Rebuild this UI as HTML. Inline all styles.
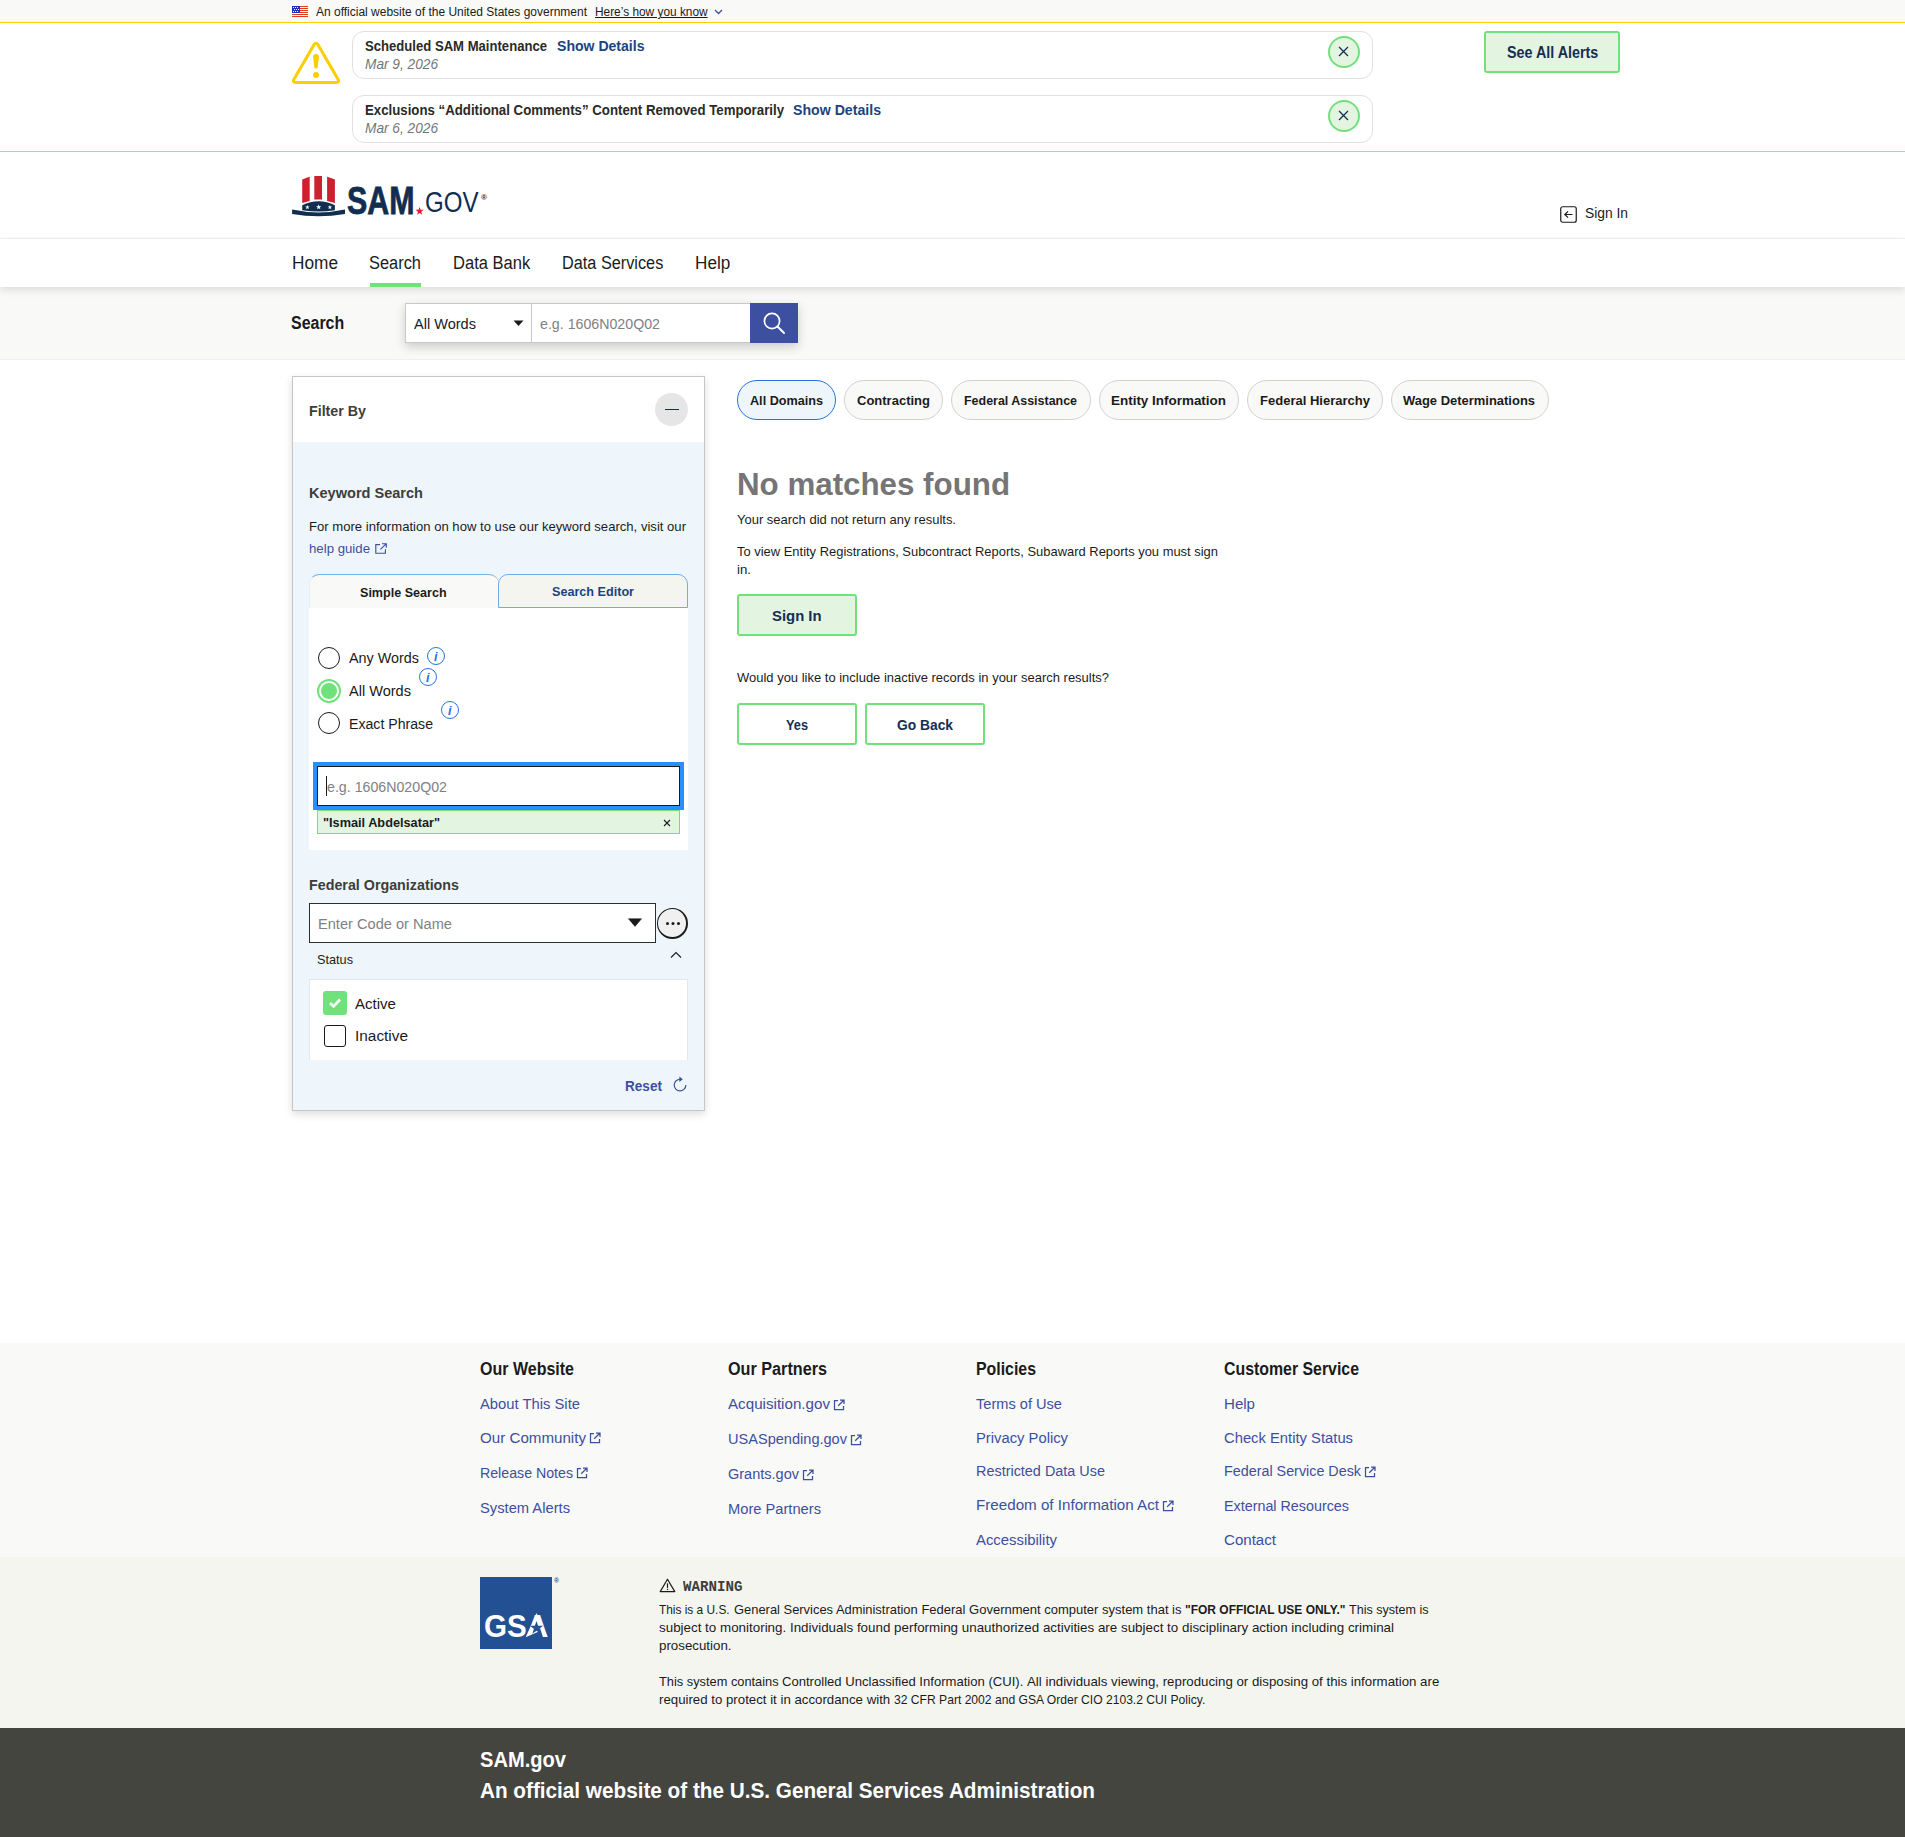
<!DOCTYPE html>
<html lang="en">
<head>
<meta charset="utf-8">
<title>SAM.gov | Search</title>
<style>
*{box-sizing:border-box;margin:0;padding:0}
html,body{width:1905px;height:1837px;overflow:hidden;background:#fff}
body{position:relative;font-family:"Liberation Sans",sans-serif;color:#1b1b1b}
.b{position:absolute}
.t{position:absolute;white-space:nowrap;line-height:1;transform-origin:0 0;display:block}
a.t{text-decoration:none}
.mono{font-family:"Liberation Mono",monospace}
svg{position:absolute;overflow:visible}
</style>
</head>
<body>
<!-- ===== gov banner ===== -->
<div class="b" style="left:0;top:0;width:1905px;height:22px;background:#f9f9f7"></div>
<section>
<!-- ===== flag + chevron ===== -->
<svg style="left:292px;top:6px" width="16" height="11" viewBox="0 0 16 11" shape-rendering="crispEdges"><rect width="16" height="11" fill="#fff"/><g fill="#db3e1f"><rect y="0" width="16" height="1"/><rect y="2" width="16" height="1"/><rect y="4" width="16" height="1"/><rect y="6" width="16" height="1"/><rect y="8" width="16" height="1"/><rect y="10" width="16" height="1"/></g><rect width="8" height="7" fill="#1e33b1"/><rect x="1" y="1" width="1" height="1" fill="#fff"/><rect x="3" y="1" width="1" height="1" fill="#fff"/><rect x="5" y="1" width="1" height="1" fill="#fff"/><rect x="2" y="3" width="1" height="1" fill="#fff"/><rect x="4" y="3" width="1" height="1" fill="#fff"/><rect x="6" y="3" width="1" height="1" fill="#fff"/><rect x="1" y="5" width="1" height="1" fill="#fff"/><rect x="3" y="5" width="1" height="1" fill="#fff"/><rect x="5" y="5" width="1" height="1" fill="#fff"/></svg>
<svg style="left:714px;top:9px" width="9" height="6" viewBox="0 0 9 6"><path d="M1 1 L4.5 4.5 L8 1" fill="none" stroke="#3d4f9f" stroke-width="1.3"/></svg>
<!-- ===== alerts ===== -->
<div class="b" style="left:0;top:22px;width:1905px;height:130px;border-top:1px solid #face00;border-bottom:1px solid #face00;background:#fff"></div>
<svg style="left:292px;top:41px" width="48" height="44" viewBox="0 0 48 44"><path d="M22.43 3.10 A1.8 1.8 0 0 1 25.57 3.10 L46.33 38.80 A1.8 1.8 0 0 1 44.78 41.50 L3.22 41.50 A1.8 1.8 0 0 1 1.67 38.80 Z" fill="none" stroke="#face00" stroke-width="3" stroke-linejoin="round"/><path d="M21.1 15.6 Q21.1 12.9 24 12.9 Q26.9 12.9 26.9 15.6 L25.8 26 Q25.6 27.6 24 27.6 Q22.4 27.6 22.2 26 Z" fill="#face00"/><circle cx="24" cy="33.9" r="3" fill="#face00"/></svg>
<div class="b" style="left:352px;top:31px;width:1021px;height:48px;border:1px solid #e0e0e0;border-radius:12px;background:#fff"></div>
<div class="b" style="left:352px;top:95px;width:1021px;height:48px;border:1px solid #e0e0e0;border-radius:12px;background:#fff"></div>
<div class="b" style="left:1328px;top:36px;width:32px;height:32px;border:2px solid #70e17b;border-radius:50%;background:#e3f5e1"></div>
<div class="b" style="left:1328px;top:100px;width:32px;height:32px;border:2px solid #70e17b;border-radius:50%;background:#e3f5e1"></div>
<svg style="left:1337.7px;top:45.8px" width="11" height="11" viewBox="0 0 11 11"><path d="M1 1 L10 10 M10 1 L1 10" stroke="#162e51" stroke-width="1.3" fill="none"/></svg>
<svg style="left:1337.7px;top:109.8px" width="11" height="11" viewBox="0 0 11 11"><path d="M1 1 L10 10 M10 1 L1 10" stroke="#162e51" stroke-width="1.3" fill="none"/></svg>
<div class="b" style="left:1484px;top:31px;width:136px;height:42px;border:2px solid #70e17b;border-radius:3px;background:#e3f5e1"></div>
<span class="t" style="left:316.00px;top:6.00px;font-size:12.5px;font-weight:400;color:#1b1b1b;transform:scaleX(0.9590);">An official website of the United States government</span>
<a class="t" href="#" style="left:595.10px;top:6.00px;font-size:12.5px;font-weight:400;color:#1b1b1b;text-decoration:underline;transform:scaleX(0.9495);">Here’s how you know</a>
<span class="t" style="left:365.00px;top:38.00px;font-size:15px;font-weight:700;color:#2a2a28;transform:scaleX(0.8734);">Scheduled SAM Maintenance</span>
<a class="t" href="#" style="left:556.60px;top:38.00px;font-size:15px;font-weight:700;color:#1a4480;transform:scaleX(0.9372);">Show Details</a>
<span class="t" style="left:365.00px;top:56.00px;font-size:15px;font-weight:400;color:#71767a;font-style:italic;transform:scaleX(0.9120);">Mar 9, 2026</span>
<span class="t" style="left:365.00px;top:102.00px;font-size:15px;font-weight:700;color:#2a2a28;transform:scaleX(0.8825);">Exclusions “Additional Comments” Content Removed Temporarily</span>
<a class="t" href="#" style="left:792.80px;top:102.00px;font-size:15px;font-weight:700;color:#1a4480;transform:scaleX(0.9426);">Show Details</a>
<span class="t" style="left:365.00px;top:120.00px;font-size:15px;font-weight:400;color:#71767a;font-style:italic;transform:scaleX(0.9120);">Mar 6, 2026</span>
<a class="t" href="#" style="left:1506.80px;top:45.00px;font-size:15.7px;font-weight:700;color:#162e51;transform:scaleX(0.9121);">See All Alerts</a>
</section>
<header>
<!-- ===== header ===== -->
<svg style="left:292px;top:174px" width="54" height="44" viewBox="0 0 54 44">
<path d="M10.2 5.6 Q14 3.6 17.7 2.7 L17.7 26.9 Q14 27.6 10.2 29 Z" fill="#cf2030"/>
<path d="M22.3 2.1 Q26.2 1.8 30 2.1 L30 25.6 Q26.2 25.3 22.3 25.6 Z" fill="#cf2030"/>
<path d="M35.1 2.8 Q39 3.7 42.9 5.6 L42.9 29.1 Q39 27.6 35.1 26.9 Z" fill="#cf2030"/>
<path d="M10.2 31.3 Q26.5 23.1 42.9 31.3 L42.9 36.2 Q26.5 38.9 10.2 36.2 Z" fill="#112e51"/>
<path d="M0.1 35.6 Q26.5 41.3 53 35.6 L53 39.9 Q26.5 44.5 0.1 39.9 Z" fill="#112e51"/>
<polygon points="15.40,30.90 15.96,32.52 17.68,32.56 16.31,33.60 16.81,35.24 15.40,34.26 13.99,35.24 14.49,33.60 13.12,32.56 14.84,32.52" fill="#fff"/>
<polygon points="26.70,30.30 27.36,32.19 29.36,32.23 27.77,33.45 28.35,35.37 26.70,34.22 25.05,35.37 25.63,33.45 24.04,32.23 26.04,32.19" fill="#fff"/>
<polygon points="37.90,30.90 38.46,32.52 40.18,32.56 38.81,33.60 39.31,35.24 37.90,34.26 36.49,35.24 36.99,33.60 35.62,32.56 37.34,32.52" fill="#fff"/>
</svg>
<svg style="left:414px;top:205px" width="12" height="12" viewBox="0 0 12 12"><polygon points="5.60,1.90 6.61,4.81 9.69,4.87 7.24,6.73 8.13,9.68 5.60,7.92 3.07,9.68 3.96,6.73 1.51,4.87 4.59,4.81" fill="#d8202f"/></svg>
<svg style="left:1560px;top:206px" width="17" height="17" viewBox="0 0 17 17"><rect x="0.75" y="0.75" width="15.5" height="15.5" rx="2" fill="none" stroke="#1b1b1b" stroke-width="1.2"/><path d="M12.5 8.5 H5 M8 5.3 L4.8 8.5 L8 11.7" fill="none" stroke="#1b1b1b" stroke-width="1.2"/></svg>
<div class="b" style="left:0;top:238px;width:1905px;height:1px;background:#f3f3f0"></div>
<div class="b" style="left:0;top:287px;width:1905px;height:73px;background:#f9f9f7;border-bottom:1px solid #f0f0ec"></div>
<div class="b" style="left:0;top:239px;width:1905px;height:48px;background:#fff;box-shadow:0 3px 8px rgba(0,0,0,.12)"></div>
<div class="b" style="left:370px;top:283px;width:51px;height:4px;background:#70e17b"></div>
<!-- search bar -->
<div class="b" style="left:405px;top:303px;width:393px;height:40px;box-shadow:0 4px 10px rgba(0,0,0,.18);background:#fff"></div>
<div class="b" style="left:405px;top:303px;width:127px;height:40px;border:1px solid #c9c9c9;background:#fff"></div>
<div class="b" style="left:531px;top:303px;width:220px;height:40px;border:1px solid #c9c9c9;background:#fff"></div>
<svg style="left:513px;top:320px" width="11" height="7" viewBox="0 0 11 7"><path d="M0.5 0.5 H10.5 L5.5 6 Z" fill="#1b1b1b"/></svg>
<div class="b" style="left:750px;top:303px;width:48px;height:40px;background:#3d4fa1"></div>
<svg style="left:762px;top:311px" width="24" height="24" viewBox="0 0 24 24"><circle cx="10" cy="10" r="7.6" fill="none" stroke="#fff" stroke-width="1.7"/><path d="M15.5 15.5 L22 22" stroke="#fff" stroke-width="2" stroke-linecap="round"/></svg>
<a class="t" href="#" style="left:1585.00px;top:205.00px;font-size:15.5px;font-weight:400;color:#1b1b1b;transform:scaleX(0.8921);">Sign In</a>
<a class="t" href="#" style="left:291.50px;top:255.00px;font-size:17.6px;font-weight:400;color:#1b1b1b;transform:scaleX(0.9800);">Home</a>
<a class="t" href="#" style="left:369.00px;top:255.00px;font-size:17.6px;font-weight:400;color:#1b1b1b;transform:scaleX(0.9327);">Search</a>
<a class="t" href="#" style="left:452.80px;top:255.00px;font-size:17.6px;font-weight:400;color:#1b1b1b;transform:scaleX(0.9397);">Data Bank</a>
<a class="t" href="#" style="left:561.60px;top:255.00px;font-size:17.6px;font-weight:400;color:#1b1b1b;transform:scaleX(0.9250);">Data Services</a>
<a class="t" href="#" style="left:694.80px;top:255.00px;font-size:17.6px;font-weight:400;color:#1b1b1b;transform:scaleX(0.9755);">Help</a>
<label class="t" style="left:291.40px;top:314.00px;font-size:18px;font-weight:700;color:#1b1b1b;transform:scaleX(0.8860);">Search</label>
<span class="t" style="left:414.00px;top:316.00px;font-size:15.5px;font-weight:400;color:#1b1b1b;transform:scaleX(0.9387);">All Words</span>
<span class="t" style="left:540.00px;top:316.00px;font-size:15.5px;font-weight:400;color:#7f8183;transform:scaleX(0.9160);">e.g. 1606N020Q02</span>
<span class="t" style="left:347.30px;top:181.00px;font-size:39.6px;font-weight:700;color:#112e51;-webkit-text-stroke:0.8px #112e51;transform:scaleX(0.7667);">SAM</span>
<span class="t" style="left:425.20px;top:188.00px;font-size:29px;font-weight:400;color:#112e51;transform:scaleX(0.8299);">GOV</span>
<span class="t" style="left:480.80px;top:194.00px;font-size:8px;font-weight:700;color:#112e51;transform:scaleX(1.0159);">®</span>
</header>
<aside>
<!-- ===== filter panel ===== -->
<div class="b" style="left:292px;top:376px;width:413px;height:735px;border:1px solid #c6c6c6;background:#eff6fb;box-shadow:0 3px 8px rgba(0,0,0,.14)"></div>
<div class="b" style="left:293px;top:377px;width:411px;height:65px;background:#fff"></div>
<div class="b" style="left:655px;top:393px;width:33px;height:33px;border-radius:50%;background:#e6e6e6"></div>
<div class="b" style="left:665px;top:409px;width:14px;height:1px;background:#162e51"></div>
<!-- help guide ext icon -->
<svg style="left:375px;top:543px" width="12" height="11" viewBox="0 0 12 11"><path d="M5 1.6 H0.8 V10.2 H10.4 V6.2 M7 0.7 H11.3 V4.8 M11.1 0.9 L5.4 6.4" fill="none" stroke="#3d4f9f" stroke-width="1.15"/></svg>
<!-- tabs -->
<div class="b" style="left:309px;top:608px;width:379px;height:242px;background:#fff"></div>
<div class="b" style="left:309px;top:574px;width:190px;height:34px;background:#f9f9f7;border-top:1px solid #73b3e7;border-left:1px solid #e6eef5;border-radius:10px 10px 0 0"></div>
<div class="b" style="left:498px;top:574px;width:190px;height:34px;background:#f5f5f0;border:1px solid #73a8f0;border-radius:10px 10px 0 0"></div>
<!-- radios -->
<div class="b" style="left:318px;top:647px;width:22px;height:22px;border:1.5px solid #1b1b1b;border-radius:50%;background:#fff"></div>
<div class="b" style="left:317px;top:679px;width:24px;height:24px;border:2px solid #70e17b;border-radius:50%;background:#fff"></div>
<div class="b" style="left:321px;top:683px;width:16px;height:16px;border-radius:50%;background:#70e17b"></div>
<div class="b" style="left:318px;top:712px;width:22px;height:22px;border:1.5px solid #1b1b1b;border-radius:50%;background:#fff"></div>
<!-- info icons -->
<div class="b" style="left:427px;top:647px;width:18px;height:18px;border:1.3px solid #2672de;border-radius:50%"></div>
<div class="b" style="left:419px;top:668px;width:18px;height:18px;border:1.3px solid #2672de;border-radius:50%"></div>
<div class="b" style="left:441px;top:701px;width:18px;height:18px;border:1.3px solid #2672de;border-radius:50%"></div>
<!-- input focused -->
<div class="b" style="left:313px;top:762px;width:371px;height:48px;background:#2491ff"></div>
<div class="b" style="left:317px;top:766px;width:363px;height:40px;border:1px solid #1b1b1b;background:#fff"></div>
<div class="b" style="left:326px;top:776px;width:1px;height:20px;background:#1b1b1b"></div>
<!-- tag -->
<div class="b" style="left:317px;top:810px;width:363px;height:24px;border:1px solid #70e17b;background:#e3f5e1"></div>
<svg style="left:663px;top:819px" width="8" height="8" viewBox="0 0 8 8"><path d="M1 1 L7 7 M7 1 L1 7" stroke="#1b1b1b" stroke-width="1.1" fill="none"/></svg>
<!-- fed org -->
<div class="b" style="left:309px;top:903px;width:347px;height:40px;border:1px solid #2e2e2a;background:#fff"></div>
<svg style="left:628px;top:918px" width="14" height="9" viewBox="0 0 14 9"><path d="M0.5 0.8 H13.5 L7 8.4 Z" fill="#1b1b1b" stroke="#1b1b1b" stroke-width=".6" stroke-linejoin="round"/></svg>
<div class="b" style="left:656.5px;top:907.5px;width:31.5px;height:31.5px;border:1.5px solid #1b1b1b;border-right-width:2px;border-bottom-width:2.2px;border-radius:50%;background:#f0f0f0"></div>
<div class="b" style="left:665.5px;top:922px;width:3.4px;height:3.4px;border-radius:50%;background:#1b1b1b;box-shadow:5.5px 0 0 #1b1b1b,11px 0 0 #1b1b1b"></div>
<!-- status -->
<svg style="left:670px;top:951px" width="12" height="8" viewBox="0 0 12 8"><path d="M1 6.5 L6 1.5 L11 6.5" fill="none" stroke="#1b1b1b" stroke-width="1.1"/></svg>
<div class="b" style="left:309px;top:979px;width:379px;height:81px;background:#fff;border:1px solid #e6e6e6;border-bottom:none"></div>
<div class="b" style="left:323px;top:991px;width:24px;height:24px;border-radius:3px;background:#70e17b"></div>
<svg style="left:328px;top:997px" width="14" height="12" viewBox="0 0 14 12"><path d="M2 6 L5.5 9.3 L12 2.5" fill="none" stroke="#fff" stroke-width="2.6"/></svg>
<div class="b" style="left:324px;top:1025px;width:22px;height:22px;border:1.5px solid #1b1b1b;border-radius:3px;background:#fff"></div>
<!-- reset icon -->
<svg style="left:671.6px;top:1075.5px" width="16" height="17" viewBox="0 0 16 17"><path d="M8.4 3.3 A5.8 5.8 0 1 0 13.8 9" fill="none" stroke="#3d4f9f" stroke-width="1.2"/><path d="M7.4 0.4 L10.8 3.3 L7.4 6 Z" fill="#3d4f9f"/></svg>
<h2 class="t" style="left:309.00px;top:403.00px;font-size:15.5px;font-weight:700;color:#3d3d3a;transform:scaleX(0.9191);">Filter By</h2>
<h3 class="t" style="left:309.00px;top:485.00px;font-size:15.5px;font-weight:700;color:#3d3d3a;transform:scaleX(0.9385);">Keyword Search</h3>
<span class="t" style="left:309.00px;top:520.00px;font-size:13.5px;font-weight:400;color:#1b1b1b;transform:scaleX(0.9700);">For more information on how to use our keyword search, visit our</span>
<a class="t" href="#" style="left:309.00px;top:542.00px;font-size:13.5px;font-weight:400;color:#3d4f9f;transform:scaleX(0.9789);">help guide</a>
<span class="t" style="left:359.90px;top:586.00px;font-size:13.5px;font-weight:700;color:#1b1b1b;transform:scaleX(0.9307);">Simple Search</span>
<span class="t" style="left:552.00px;top:585.00px;font-size:13.5px;font-weight:700;color:#1a4480;transform:scaleX(0.9341);">Search Editor</span>
<span class="t" style="left:349.00px;top:650.00px;font-size:15.5px;font-weight:400;color:#1b1b1b;transform:scaleX(0.9268);">Any Words</span>
<span class="t" style="left:349.00px;top:683.00px;font-size:15.5px;font-weight:400;color:#1b1b1b;transform:scaleX(0.9387);">All Words</span>
<span class="t" style="left:349.00px;top:716.00px;font-size:15.5px;font-weight:400;color:#1b1b1b;transform:scaleX(0.9112);">Exact Phrase</span>
<span class="t" style="left:326.50px;top:779.00px;font-size:15.5px;font-weight:400;color:#7f8183;transform:scaleX(0.9160);">e.g. 1606N020Q02</span>
<span class="t" style="left:323.00px;top:816.00px;font-size:13px;font-weight:700;color:#1b1b1b;transform:scaleX(0.9790);">&quot;Ismail Abdelsatar&quot;</span>
<h3 class="t" style="left:309.00px;top:877.00px;font-size:15.5px;font-weight:700;color:#3d3d3a;transform:scaleX(0.9214);">Federal Organizations</h3>
<span class="t" style="left:317.50px;top:916.00px;font-size:15.5px;font-weight:400;color:#7f8183;transform:scaleX(0.9426);">Enter Code or Name</span>
<span class="t" style="left:317.00px;top:953.00px;font-size:13.5px;font-weight:400;color:#1b1b1b;transform:scaleX(0.9404);">Status</span>
<span class="t" style="left:355.00px;top:996.00px;font-size:15.5px;font-weight:400;color:#1b1b1b;transform:scaleX(0.9711);">Active</span>
<span class="t" style="left:355.00px;top:1028.00px;font-size:15.5px;font-weight:400;color:#1b1b1b;transform:scaleX(0.9921);">Inactive</span>
<a class="t" href="#" style="left:625.00px;top:1078.00px;font-size:15.5px;font-weight:700;color:#3d4f9f;transform:scaleX(0.8764);">Reset</a>
<span class="t" style="left:434.30px;top:650.00px;font-size:13px;font-weight:700;color:#2672de;font-style:italic;transform:scaleX(0.9655);">i</span>
<span class="t" style="left:426.30px;top:671.00px;font-size:13px;font-weight:700;color:#2672de;font-style:italic;transform:scaleX(0.9655);">i</span>
<span class="t" style="left:448.30px;top:704.00px;font-size:13px;font-weight:700;color:#2672de;font-style:italic;transform:scaleX(0.9655);">i</span>
</aside>
<main>
<!-- ===== results ===== -->
<div class="b" style="left:737px;top:380px;width:99px;height:40px;border:1px solid #2672de;border-radius:20px;background:#eff6fb"></div>
<div class="b" style="left:844px;top:380px;width:99px;height:40px;border:1px solid #d2d2d0;border-radius:20px;background:#f9f9f7"></div>
<div class="b" style="left:951px;top:380px;width:140px;height:40px;border:1px solid #d2d2d0;border-radius:20px;background:#f9f9f7"></div>
<div class="b" style="left:1099px;top:380px;width:140px;height:40px;border:1px solid #d2d2d0;border-radius:20px;background:#f9f9f7"></div>
<div class="b" style="left:1247px;top:380px;width:136px;height:40px;border:1px solid #d2d2d0;border-radius:20px;background:#f9f9f7"></div>
<div class="b" style="left:1391px;top:380px;width:158px;height:40px;border:1px solid #d2d2d0;border-radius:20px;background:#f9f9f7"></div>
<div class="b" style="left:737px;top:594px;width:120px;height:42px;border:2px solid #70e17b;border-radius:3px;background:#e3f5e1"></div>
<div class="b" style="left:737px;top:703px;width:120px;height:42px;border:2px solid #70e17b;border-radius:3px;background:#fff"></div>
<div class="b" style="left:865px;top:703px;width:120px;height:42px;border:2px solid #70e17b;border-radius:3px;background:#fff"></div>
<a class="t" href="#" style="left:750.00px;top:394.00px;font-size:13.5px;font-weight:700;color:#1b1b1b;transform:scaleX(0.9357);">All Domains</a>
<a class="t" href="#" style="left:857.00px;top:394.00px;font-size:13.5px;font-weight:700;color:#1b1b1b;transform:scaleX(0.9637);">Contracting</a>
<a class="t" href="#" style="left:964.00px;top:394.00px;font-size:13.5px;font-weight:700;color:#1b1b1b;transform:scaleX(0.9220);">Federal Assistance</a>
<a class="t" href="#" style="left:1111.00px;top:394.00px;font-size:13.5px;font-weight:700;color:#1b1b1b;transform:scaleX(0.9957);">Entity Information</a>
<a class="t" href="#" style="left:1260.00px;top:394.00px;font-size:13.5px;font-weight:700;color:#1b1b1b;transform:scaleX(0.9644);">Federal Hierarchy</a>
<a class="t" href="#" style="left:1403.00px;top:394.00px;font-size:13.5px;font-weight:700;color:#1b1b1b;transform:scaleX(0.9598);">Wage Determinations</a>
<h1 class="t" style="left:737.00px;top:468.00px;font-size:32px;font-weight:700;color:#757575;transform:scaleX(0.9781);">No matches found</h1>
<p class="t" style="left:737.00px;top:513.00px;font-size:13.5px;font-weight:400;color:#1b1b1b;transform:scaleX(0.9620);">Your search did not return any results.</p>
<span class="t" style="left:737.00px;top:545.00px;font-size:13.5px;font-weight:400;color:#1b1b1b;transform:scaleX(0.9582);">To view Entity Registrations, Subcontract Reports, Subaward Reports you must sign</span>
<span class="t" style="left:737.00px;top:563.00px;font-size:13.5px;font-weight:400;color:#1b1b1b;transform:scaleX(0.9814);">in.</span>
<a class="t" href="#" style="left:772.40px;top:608.00px;font-size:15.5px;font-weight:700;color:#162e51;transform:scaleX(0.9599);">Sign In</a>
<span class="t" style="left:737.00px;top:671.00px;font-size:13.5px;font-weight:400;color:#1b1b1b;transform:scaleX(0.9614);">Would you like to include inactive records in your search results?</span>
<a class="t" href="#" style="left:786.00px;top:717.00px;font-size:15.5px;font-weight:700;color:#162e51;transform:scaleX(0.8229);">Yes</a>
<a class="t" href="#" style="left:897.00px;top:717.00px;font-size:15.5px;font-weight:700;color:#162e51;transform:scaleX(0.8904);">Go Back</a>
</main>
<footer>
<!-- ===== footer ===== -->
<div class="b" style="left:0;top:1343px;width:1905px;height:214px;background:#f9f9f7"></div>
<div class="b" style="left:0;top:1557px;width:1905px;height:171px;background:#f5f5f0"></div>
<div class="b" style="left:0;top:1728px;width:1905px;height:109px;background:#454540"></div>
<svg style="left:589px;top:1432px" width="12" height="12" viewBox="0 0 12 12"><path d="M5 1.5 H1.5 V10.5 H10.5 V7 M7 1 H11 V5 M10.8 1.2 L5.2 6.8" fill="none" stroke="#3d4f9f" stroke-width="1.25"/></svg>
<svg style="left:576px;top:1467px" width="12" height="12" viewBox="0 0 12 12"><path d="M5 1.5 H1.5 V10.5 H10.5 V7 M7 1 H11 V5 M10.8 1.2 L5.2 6.8" fill="none" stroke="#3d4f9f" stroke-width="1.25"/></svg>
<svg style="left:833px;top:1399px" width="12" height="12" viewBox="0 0 12 12"><path d="M5 1.5 H1.5 V10.5 H10.5 V7 M7 1 H11 V5 M10.8 1.2 L5.2 6.8" fill="none" stroke="#3d4f9f" stroke-width="1.25"/></svg>
<svg style="left:850px;top:1434px" width="12" height="12" viewBox="0 0 12 12"><path d="M5 1.5 H1.5 V10.5 H10.5 V7 M7 1 H11 V5 M10.8 1.2 L5.2 6.8" fill="none" stroke="#3d4f9f" stroke-width="1.25"/></svg>
<svg style="left:802px;top:1469px" width="12" height="12" viewBox="0 0 12 12"><path d="M5 1.5 H1.5 V10.5 H10.5 V7 M7 1 H11 V5 M10.8 1.2 L5.2 6.8" fill="none" stroke="#3d4f9f" stroke-width="1.25"/></svg>
<svg style="left:1162px;top:1500px" width="12" height="12" viewBox="0 0 12 12"><path d="M5 1.5 H1.5 V10.5 H10.5 V7 M7 1 H11 V5 M10.8 1.2 L5.2 6.8" fill="none" stroke="#3d4f9f" stroke-width="1.25"/></svg>
<svg style="left:1364px;top:1466px" width="12" height="12" viewBox="0 0 12 12"><path d="M5 1.5 H1.5 V10.5 H10.5 V7 M7 1 H11 V5 M10.8 1.2 L5.2 6.8" fill="none" stroke="#3d4f9f" stroke-width="1.25"/></svg>
<!-- GSA logo -->
<div class="b" style="left:480px;top:1577px;width:72px;height:72px;background:#225093"></div>
<svg style="left:520px;top:1608px;z-index:3" width="32" height="34" viewBox="0 0 32 34"><polygon points="16.50,5.00 27.70,29.10 5.80,29.10" fill="#fff"/><polygon points="16.50,13.00 18.12,17.78 23.16,17.84 19.12,20.85 20.61,25.66 16.50,22.75 12.39,25.66 13.88,20.85 9.84,17.84 14.88,17.78" fill="#225093"/><polygon points="16.50,21.60 18.90,23.40 5.70,29.20 23.00,29.20 20.00,20.00" fill="#225093"/></svg>
<svg style="left:659px;top:1578px" width="17" height="15" viewBox="0 0 17 15"><path d="M8.5 1.2 L15.8 13.6 H1.2 Z" fill="none" stroke="#1b1b1b" stroke-width="1.2" stroke-linejoin="round"/><rect x="7.9" y="5.3" width="1.2" height="4.6" fill="#1b1b1b"/><rect x="7.9" y="10.8" width="1.2" height="1.3" fill="#1b1b1b"/></svg>
<h4 class="t" style="left:480.00px;top:1361.00px;font-size:17.5px;font-weight:700;color:#1b1b1b;transform:scaleX(0.9147);">Our Website</h4>
<h4 class="t" style="left:728.00px;top:1361.00px;font-size:17.5px;font-weight:700;color:#1b1b1b;transform:scaleX(0.9254);">Our Partners</h4>
<h4 class="t" style="left:976.00px;top:1361.00px;font-size:17.5px;font-weight:700;color:#1b1b1b;transform:scaleX(0.9069);">Policies</h4>
<h4 class="t" style="left:1224.00px;top:1361.00px;font-size:17.5px;font-weight:700;color:#1b1b1b;transform:scaleX(0.9071);">Customer Service</h4>
<a class="t" href="#" style="left:480.00px;top:1396.00px;font-size:15.5px;font-weight:400;color:#3d4f9f;transform:scaleX(0.9538);">About This Site</a>
<a class="t" href="#" style="left:480.00px;top:1430.00px;font-size:15.5px;font-weight:400;color:#3d4f9f;transform:scaleX(0.9767);">Our Community</a>
<a class="t" href="#" style="left:480.00px;top:1465.00px;font-size:15.5px;font-weight:400;color:#3d4f9f;transform:scaleX(0.9147);">Release Notes</a>
<a class="t" href="#" style="left:480.00px;top:1500.00px;font-size:15.5px;font-weight:400;color:#3d4f9f;transform:scaleX(0.9499);">System Alerts</a>
<a class="t" href="#" style="left:728.00px;top:1396.00px;font-size:15.5px;font-weight:400;color:#3d4f9f;transform:scaleX(0.9783);">Acquisition.gov</a>
<a class="t" href="#" style="left:728.00px;top:1431.00px;font-size:15.5px;font-weight:400;color:#3d4f9f;transform:scaleX(0.9394);">USASpending.gov</a>
<a class="t" href="#" style="left:728.00px;top:1466.00px;font-size:15.5px;font-weight:400;color:#3d4f9f;transform:scaleX(0.9365);">Grants.gov</a>
<a class="t" href="#" style="left:728.00px;top:1501.00px;font-size:15.5px;font-weight:400;color:#3d4f9f;transform:scaleX(0.9470);">More Partners</a>
<a class="t" href="#" style="left:976.00px;top:1396.00px;font-size:15.5px;font-weight:400;color:#3d4f9f;transform:scaleX(0.9418);">Terms of Use</a>
<a class="t" href="#" style="left:976.00px;top:1430.00px;font-size:15.5px;font-weight:400;color:#3d4f9f;transform:scaleX(0.9537);">Privacy Policy</a>
<a class="t" href="#" style="left:976.00px;top:1463.00px;font-size:15.5px;font-weight:400;color:#3d4f9f;transform:scaleX(0.9300);">Restricted Data Use</a>
<a class="t" href="#" style="left:976.00px;top:1497.00px;font-size:15.5px;font-weight:400;color:#3d4f9f;transform:scaleX(0.9789);">Freedom of Information Act</a>
<a class="t" href="#" style="left:976.00px;top:1532.00px;font-size:15.5px;font-weight:400;color:#3d4f9f;transform:scaleX(0.9595);">Accessibility</a>
<a class="t" href="#" style="left:1224.00px;top:1396.00px;font-size:15.5px;font-weight:400;color:#3d4f9f;transform:scaleX(0.9721);">Help</a>
<a class="t" href="#" style="left:1224.00px;top:1430.00px;font-size:15.5px;font-weight:400;color:#3d4f9f;transform:scaleX(0.9537);">Check Entity Status</a>
<a class="t" href="#" style="left:1224.00px;top:1463.00px;font-size:15.5px;font-weight:400;color:#3d4f9f;transform:scaleX(0.9246);">Federal Service Desk</a>
<a class="t" href="#" style="left:1224.00px;top:1498.00px;font-size:15.5px;font-weight:400;color:#3d4f9f;transform:scaleX(0.9241);">External Resources</a>
<a class="t" href="#" style="left:1224.00px;top:1532.00px;font-size:15.5px;font-weight:400;color:#3d4f9f;transform:scaleX(0.9734);">Contact</a>
<span class="t mono" style="left:683.40px;top:1580.00px;font-size:14.5px;font-weight:700;color:#3d3d3a;transform:scaleX(0.9767);">WARNING</span>
<span class="t" style="left:659.30px;top:1603.00px;font-size:13px;font-weight:400;color:#1b1b1b;transform:scaleX(0.9134);">This is a U.S.</span>
<span class="t" style="left:734.00px;top:1603.00px;font-size:13px;font-weight:400;color:#1b1b1b;transform:scaleX(0.9931);">General Services Administration</span>
<span class="t" style="left:921.40px;top:1603.00px;font-size:13px;font-weight:400;color:#1b1b1b;">Federal Government computer system that is</span>
<span class="t" style="left:1185.00px;top:1603.00px;font-size:13px;font-weight:700;color:#1b1b1b;transform:scaleX(0.9218);">&quot;FOR OFFICIAL USE ONLY.&quot;</span>
<span class="t" style="left:1349.00px;top:1603.00px;font-size:13px;font-weight:400;color:#1b1b1b;transform:scaleX(0.9655);">This system is</span>
<span class="t" style="left:659.30px;top:1621.00px;font-size:13px;font-weight:400;color:#1b1b1b;transform:scaleX(1.0295);">subject to monitoring. Individuals found performing unauthorized activities are subject to disciplinary action including criminal</span>
<span class="t" style="left:659.30px;top:1639.00px;font-size:13px;font-weight:400;color:#1b1b1b;transform:scaleX(1.0236);">prosecution.</span>
<span class="t" style="left:659.30px;top:1675.00px;font-size:13px;font-weight:400;color:#1b1b1b;transform:scaleX(0.9854);">This system contains</span>
<span class="t" style="left:782.00px;top:1675.00px;font-size:13px;font-weight:400;color:#1b1b1b;transform:scaleX(1.0059);">Controlled Unclassified Information (CUI).</span>
<span class="t" style="left:1027.20px;top:1675.00px;font-size:13px;font-weight:400;color:#1b1b1b;transform:scaleX(1.0207);">All individuals viewing, reproducing or disposing of this information are</span>
<span class="t" style="left:659.30px;top:1693.00px;font-size:13px;font-weight:400;color:#1b1b1b;transform:scaleX(1.0189);">required to protect it in accordance with</span>
<span class="t" style="left:894.10px;top:1693.00px;font-size:13px;font-weight:400;color:#1b1b1b;transform:scaleX(0.9312);">32 CFR Part 2002 and GSA Order CIO 2103.2 CUI Policy.</span>
<span class="t" style="left:480.00px;top:1750.00px;font-size:21.5px;font-weight:700;color:#fff;transform:scaleX(0.9349);">SAM.gov</span>
<span class="t" style="left:480.00px;top:1781.00px;font-size:21.5px;font-weight:700;color:#fff;transform:scaleX(0.9634);">An official website of the U.S. General Services Administration</span>
<span class="t" style="left:484.00px;top:1610.00px;font-size:32px;font-weight:700;color:#fff;transform:scaleX(0.9235);">GSA</span>
<span class="t" style="left:554.30px;top:1578.00px;font-size:6.5px;font-weight:700;color:#225093;transform:scaleX(1.0423);">®</span>
</footer>

</body>
</html>
